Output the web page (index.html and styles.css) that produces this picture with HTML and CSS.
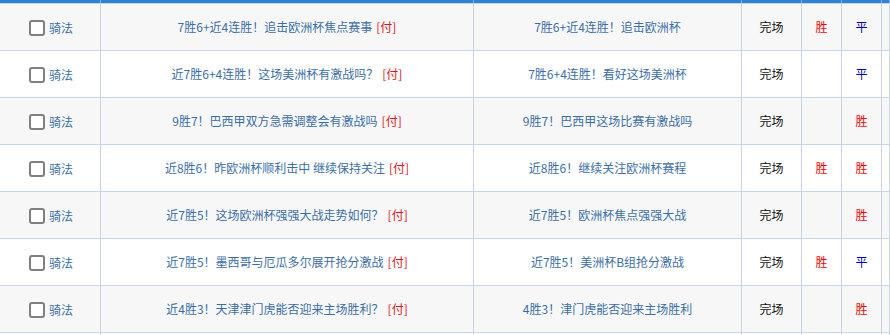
FILE: index.html
```html
<!DOCTYPE html>
<html lang="zh-CN">
<head>
<meta charset="utf-8">
<title>列表</title>
<link rel="stylesheet" href="styles.css">
</head>
<body>
<div class="table">
  <div class="row head">
    <div class="cell c1"></div><div class="cell c2"></div><div class="cell c3"></div><div class="cell c4"></div><div class="cell c5"></div><div class="cell c6"></div><div class="cell c7"></div>
  </div>
  <div class="row odd">
    <div class="cell c1"><span class="cb"></span><a class="link">骑法</a></div>
    <div class="cell c2"><a class="link">7胜6+近4连胜！追击欧洲杯焦点赛事</a> <span class="pay">[付]</span></div>
    <div class="cell c3"><a class="link">7胜6+近4连胜！追击欧洲杯</a></div>
    <div class="cell c4">完场</div>
    <div class="cell c5"><span class="win">胜</span></div>
    <div class="cell c6"><span class="draw">平</span></div>
    <div class="cell c7"></div>
  </div>
  <div class="row">
    <div class="cell c1"><span class="cb"></span><a class="link">骑法</a></div>
    <div class="cell c2"><a class="link">近7胜6+4连胜！这场美洲杯有激战吗？</a> <span class="pay">[付]</span></div>
    <div class="cell c3"><a class="link">7胜6+4连胜！看好这场美洲杯</a></div>
    <div class="cell c4">完场</div>
    <div class="cell c5"></div>
    <div class="cell c6"><span class="draw">平</span></div>
    <div class="cell c7"></div>
  </div>
  <div class="row odd">
    <div class="cell c1"><span class="cb"></span><a class="link">骑法</a></div>
    <div class="cell c2"><a class="link">9胜7！巴西甲双方急需调整会有激战吗</a> <span class="pay">[付]</span></div>
    <div class="cell c3"><a class="link">9胜7！巴西甲这场比赛有激战吗</a></div>
    <div class="cell c4">完场</div>
    <div class="cell c5"></div>
    <div class="cell c6"><span class="win">胜</span></div>
    <div class="cell c7"></div>
  </div>
  <div class="row">
    <div class="cell c1"><span class="cb"></span><a class="link">骑法</a></div>
    <div class="cell c2"><a class="link">近8胜6！昨欧洲杯顺利击中 继续保持关注</a> <span class="pay">[付]</span></div>
    <div class="cell c3"><a class="link">近8胜6！继续关注欧洲杯赛程</a></div>
    <div class="cell c4">完场</div>
    <div class="cell c5"><span class="win">胜</span></div>
    <div class="cell c6"><span class="win">胜</span></div>
    <div class="cell c7"></div>
  </div>
  <div class="row odd">
    <div class="cell c1"><span class="cb"></span><a class="link">骑法</a></div>
    <div class="cell c2"><a class="link">近7胜5！这场欧洲杯强强大战走势如何？</a> <span class="pay">[付]</span></div>
    <div class="cell c3"><a class="link">近7胜5！欧洲杯焦点强强大战</a></div>
    <div class="cell c4">完场</div>
    <div class="cell c5"></div>
    <div class="cell c6"><span class="win">胜</span></div>
    <div class="cell c7"></div>
  </div>
  <div class="row">
    <div class="cell c1"><span class="cb"></span><a class="link">骑法</a></div>
    <div class="cell c2"><a class="link">近7胜5！墨西哥与厄瓜多尔展开抢分激战</a> <span class="pay">[付]</span></div>
    <div class="cell c3"><a class="link">近7胜5！美洲杯B组抢分激战</a></div>
    <div class="cell c4">完场</div>
    <div class="cell c5"><span class="win">胜</span></div>
    <div class="cell c6"><span class="draw">平</span></div>
    <div class="cell c7"></div>
  </div>
  <div class="row odd">
    <div class="cell c1"><span class="cb"></span><a class="link">骑法</a></div>
    <div class="cell c2"><a class="link">近4胜3！天津津门虎能否迎来主场胜利？</a> <span class="pay">[付]</span></div>
    <div class="cell c3"><a class="link">4胜3！津门虎能否迎来主场胜利</a></div>
    <div class="cell c4">完场</div>
    <div class="cell c5"></div>
    <div class="cell c6"><span class="win">胜</span></div>
    <div class="cell c7"></div>
  </div>
  <div class="row tail">
    <div class="cell c1"></div><div class="cell c2"></div><div class="cell c3"></div><div class="cell c4"></div><div class="cell c5"></div><div class="cell c6"></div><div class="cell c7"></div>
  </div>
</div>
</body>
</html>
```
FILE: styles.css
```css
html, body {
  margin: 0;
  padding: 0;
  background: #ffffff;
  overflow: hidden;
}
body {
  font-family: "Noto Sans CJK SC", "Microsoft YaHei", sans-serif;
  font-size: 12px;
  color: #111;
}
.table {
  width: 890px;
  height: 335px;
  overflow: hidden;
}
.row {
  display: grid;
  grid-template-columns: 101px 373px 268px 60px 40px 40px 1fr;
  height: 47px;
  border-bottom: 1px solid #c6d6e6;
  box-sizing: border-box;
  background: #ffffff;
}
.row.odd {
  background: #f7f7f7;
}
.row.head {
  height: 4px;
  background: #2f80d7;
  border-bottom: 1px solid #c6d6e6;
}
.row.tail {
  height: 3px;
  border-bottom: none;
}
.row.head .cell {
  border-right-color: #7fb0e6;
}
.cell {
  border-right: 1px solid #c6d6e6;
  box-sizing: border-box;
  display: flex;
  align-items: center;
  justify-content: center;
  white-space: nowrap;
  line-height: 16px;
}
.c1 {
  gap: 4px;
  padding-top: 1px;
  padding-left: 2px;
}
.link {
  color: #3a6ea8;
  text-decoration: none;
}
.c2 .pay {
  margin-left: 4px;
}
.pay {
  color: #e0131a;
}
.win {
  color: #ff0000;
}
.draw {
  color: #0000c8;
}
.cb {
  width: 12px;
  height: 12px;
  border: 2px solid #808080;
  border-radius: 3px;
  background: #fff;
  display: inline-block;
}
```
